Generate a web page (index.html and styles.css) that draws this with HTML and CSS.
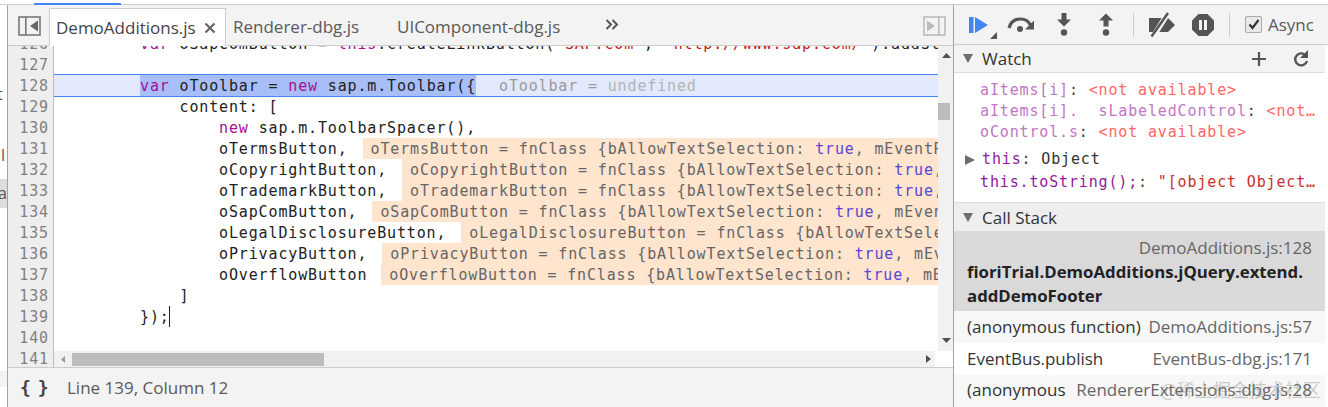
FILE: index.html
```html
<!DOCTYPE html>
<html lang="en">
<head>
<meta charset="utf-8">
<title>DevTools Sources</title>
<link rel="stylesheet" href="styles.css">
</head>
<body>
<div class="topline"><div class="progress"></div></div>
<div class="app">
  <div class="strip">
    <div class="strip-t">t</div>
    <div class="strip-l">l</div>
    <div class="strip-a">a</div>
    <div class="strip-end"></div>
  </div>
  <main class="main">
    <div class="tabbar">
      <svg class="toggle" width="23" height="20" viewBox="0 0 23 20"><rect x="1" y="1" width="21" height="18" fill="none" stroke="#777" stroke-width="1.6"/><rect x="7" y="1" width="1.6" height="18" fill="#777"/><path d="M20 4.5v11l-8-5.500z" fill="#666"/></svg>
      <div class="tab active"><span>DemoAdditions.js</span><svg class="close" width="12" height="12" viewBox="0 0 12 12"><path d="M1.500 1.500l9 9M10.500 1.500l-9 9" stroke="#666" stroke-width="2.200"/></svg></div>
      <div class="tab t2">Renderer-dbg.js</div>
      <div class="tab t3">UIComponent-dbg.js</div>
      <svg class="more" width="14" height="12" viewBox="0 0 14 12"><path d="M1.500 1l4.500 4.500-4.500 4.500M7.500 1l4.500 4.500-4.500 4.500" fill="none" stroke="#555" stroke-width="2"/></svg>
      <svg class="toggle right" width="23" height="20" viewBox="0 0 23 20"><rect x="1" y="1" width="21" height="18" fill="none" stroke="#bbb" stroke-width="1.600"/><rect x="15" y="1" width="1.600" height="18" fill="#bbb"/><path d="M4 4.500v11l8-5.500z" fill="#bbb"/></svg>
    </div>
    <div class="editor">
      <div class="gutter">
        <div class="gutter-lines">
          <div>126</div><div>127</div><div>128</div><div>129</div><div>130</div><div>131</div><div>132</div><div>133</div>
          <div>134</div><div>135</div><div>136</div><div>137</div><div>138</div><div>139</div><div>140</div><div>141</div>
        </div>
      </div>
      <div class="code">
        <div class="code-row">
          <div class="lines">
            <div class="line">        <span class="kw">var</span> oSapComButton = <span class="kw">this</span>.createLinkButton(<span class="str">"SAP.com"</span>, <span class="str">"http://www.sap.com/"</span>).addStyleClass(</div>
            <div class="line"> </div>
            <div class="line current"><span class="sel">        </span><span class="selected"><span class="kw">var</span> oToolbar = <span class="kw">new</span> sap.m.Toolbar({</span><span class="hint">oToolbar = <span class="hint-un">undefined</span></span></div>
            <div class="line">            content: [</div>
            <div class="line">                <span class="kw">new</span> sap.m.ToolbarSpacer(),</div>
            <div class="line">                oTermsButton,<span class="deco">oTermsButton = fnClass {bAllowTextSelection: <span class="bool">true</span>, mEventRegistry: {}, sId: "__link0"}</span></div>
            <div class="line">                oCopyrightButton,<span class="deco">oCopyrightButton = fnClass {bAllowTextSelection: <span class="bool">true</span>, mEventRegistry: {}}</span></div>
            <div class="line">                oTrademarkButton,<span class="deco">oTrademarkButton = fnClass {bAllowTextSelection: <span class="bool">true</span>, mEventRegistry: {}}</span></div>
            <div class="line">                oSapComButton,<span class="deco">oSapComButton = fnClass {bAllowTextSelection: <span class="bool">true</span>, mEventRegistry: {}}</span></div>
            <div class="line">                oLegalDisclosureButton,<span class="deco">oLegalDisclosureButton = fnClass {bAllowTextSelection: <span class="bool">true</span>, mEventRegistry: {}}</span></div>
            <div class="line">                oPrivacyButton,<span class="deco">oPrivacyButton = fnClass {bAllowTextSelection: <span class="bool">true</span>, mEventRegistry: {}}</span></div>
            <div class="line">                oOverflowButton<span class="deco deco-last">oOverflowButton = fnClass {bAllowTextSelection: <span class="bool">true</span>, mEventRegistry: {}}</span></div>
            <div class="line">            ]</div>
            <div class="line">        });<span class="caret"></span></div>
            <div class="line"> </div>
            <div class="line"> </div>
          </div>
          <div class="vscroll">
            <svg class="arrow-up" width="9" height="5" viewBox="0 0 9 5"><path d="M0 5l4.500-5 4.500 5z" fill="#505050"/></svg>
            <div class="vthumb"></div>
            <svg class="arrow-down" width="9" height="5" viewBox="0 0 9 5"><path d="M0 0l4.500 5 4.500-5z" fill="#505050"/></svg>
          </div>
        </div>
        <div class="hscroll">
          <svg class="arrow-left" width="4" height="7" viewBox="0 0 4 7"><path d="M4 0L0 3.500 4 7z" fill="#999"/></svg>
          <div class="hthumb"></div>
          <svg class="arrow-right" width="5" height="8" viewBox="0 0 5 8"><path d="M0 0l5 4-5 4z" fill="#505050"/></svg>
          <div class="corner"></div>
        </div>
      </div>
    </div>
    <div class="status">
      <span class="braces">{ }</span>
      <span class="pos">Line 139, Column 12</span>
    </div>
  </main>
  <aside class="side">
    <div class="debugbar">
      <svg class="ic-resume" width="29" height="24" viewBox="0 0 29 24"><rect x="0" y="0" width="4.500" height="16" fill="#4285f4"/><path d="M6 0l13 8-13 8z" fill="#4285f4"/><path d="M28 15v7h-7z" fill="#555"/></svg>
      <svg class="ic-over" width="28" height="18" viewBox="0 0 28 18"><path d="M2 13C4 6 9 4 13.500 4c4.500 0 8 2 10 6" fill="none" stroke="#555" stroke-width="3.200"/><path d="M27 5.500v9h-9z" fill="#555"/><circle cx="13" cy="14" r="3" fill="#555"/></svg>
      <svg class="ic-into" width="14" height="24" viewBox="0 0 14 24"><rect x="4.500" y="0" width="5" height="7" fill="#555"/><path d="M0 6.500h14l-7 7z" fill="#555"/><circle cx="7" cy="19.500" r="3.200" fill="#555"/></svg>
      <svg class="ic-out" width="14" height="24" viewBox="0 0 14 24"><rect x="4.500" y="6" width="5" height="7.500" fill="#555"/><path d="M0 7.500h14l-7-7z" fill="#555"/><circle cx="7" cy="19.500" r="3.200" fill="#555"/></svg>
      <div class="sep"></div>
      <svg class="ic-bp" width="28" height="26" viewBox="0 0 28 26"><path d="M1 6h19l7 7-7 7H1z" fill="#555"/><path d="M5 25L20 1" stroke="#f3f3f3" stroke-width="5.500"/><path d="M3.500 24.500L20 1" stroke="#555" stroke-width="2.500"/></svg>
      <svg class="ic-pause" width="22" height="22" viewBox="0 0 22 22"><path d="M6.500 0h9L22 6.500v9L15.500 22h-9L0 15.500v-9z" fill="#555"/><rect x="7" y="6" width="3" height="10" fill="#f3f3f3"/><rect x="12" y="6" width="3" height="10" fill="#f3f3f3"/></svg>
      <div class="sep sep2"></div>
      <div class="check"><svg width="12" height="11" viewBox="0 0 12 11"><path d="M1.500 5.500l3 3.500 6-8" fill="none" stroke="#333" stroke-width="2.200"/></svg></div>
      <span class="async">Async</span>
    </div>
    <div class="sec-head">
      <span class="tri"></span><span class="sec-title">Watch</span>
      <svg class="ic-plus" width="16" height="16" viewBox="0 0 16 16"><path d="M8 1v14M1 8h14" stroke="#555" stroke-width="2.200"/></svg>
      <svg class="ic-refresh" width="16" height="17" viewBox="0 0 16 17"><path d="M13.500 6.500A6 6 0 1 0 14 11" fill="none" stroke="#555" stroke-width="2.400"/><path d="M15 0v8H7z" fill="#555"/></svg>
    </div>
    <div class="watch">
      <div class="w w1"><span class="wn">aItems[i]</span><span class="wc">: </span><span class="wna">&lt;not available&gt;</span></div>
      <div class="w"><span class="wn">aItems[i].  sLabeledControl</span><span class="wc">: </span><span class="wna">&lt;not…</span></div>
      <div class="w"><span class="wn">oControl.s</span><span class="wc">: </span><span class="wna">&lt;not available&gt;</span></div>
      <div class="w w4"><span class="wtri"></span><span class="wt">this</span><span class="wc">: </span><span class="wo">Object</span></div>
      <div class="w w5"><span class="wt">this.toString();</span><span class="wc">: </span><span class="ws">"[object Object…</span></div>
    </div>
    <div class="sec-head stack"><span class="tri"></span><span class="sec-title">Call Stack</span></div>
    <div class="frame selected-frame">
      <div class="loc">DemoAdditions.js:128</div>
      <div class="fn-bold">fioriTrial.DemoAdditions.jQuery.extend.<br>addDemoFooter</div>
    </div>
    <div class="frame row alt"><span>(anonymous function)</span><span class="loc">DemoAdditions.js:57</span></div>
    <div class="frame row"><span>EventBus.publish</span><span class="loc">EventBus-dbg.js:171</span></div>
    <div class="frame row alt last"><span>(anonymous</span><span class="loc">RendererExtensions-dbg.js:28</span></div>
    <div class="mark">@稀土掘金技术社区</div>
  </aside>
</div>
</body>
</html>
```
FILE: styles.css
```css
* { box-sizing: border-box; }
html, body { margin: 0; height: 407px; overflow: hidden; background: #fff; }
body { font-family: "Open Sans", "Noto Sans", sans-serif; color: #333; }

.topline { height: 5px; border-bottom: 1px solid #ccc; position: relative; }
.progress { position: absolute; left: 34px; top: 3px; width: 87px; height: 2px; background: #4285f4; }

.app { display: flex; height: 402px; }

.strip { width: 7px; flex: none; overflow: hidden; font-size: 16px; color: #555; display: flex; flex-direction: column; }
.strip-t { height: 20px; margin-top: 79px; line-height: 20px; margin-left: -3px; }
.strip-l { height: 20px; margin-top: 41px; line-height: 20px; margin-left: 1px; }
.strip-a { height: 29px; margin-top: 14px; line-height: 29px; background: #ddd; margin-left: 0; text-indent: -2px; }
.strip-end { height: 16px; margin-top: 163px; background: #f3f3f3; }

.main { width: 947px; flex: none; display: flex; flex-direction: column; border-left: 1px solid #a3a3a3; border-right: 1px solid #a3a3a3; }

.tabbar { height: 41px; flex: none; background: #f3f3f3; border-bottom: 1px solid #ccc; display: flex; align-items: flex-end; position: relative; font-size: 17px; color: #5a5a5a; }
.toggle { position: absolute; left: 10px; top: 11px; }
.toggle.right { left: auto; right: 7px; top: 11px; }
.tab { height: 38px; line-height: 40px; white-space: nowrap; }
.tab.active { margin-left: 41px; width: 177px; margin-bottom: -1px; height: 38px; background: #fff; border: 1px solid #ccc; border-bottom: 1px solid #fff; padding: 2px 0 0 6px; display: flex; align-items: center; gap: 8px; color: #444; line-height: 24px; }
.close { flex: none; }
.t2 { margin-left: 7px; width: 164px; }
.t3 { width: 190px; }
.more { margin: 0 0 14px 18px; flex: none; }

.editor { height: 321px; flex: none; display: flex; overflow: hidden; }
.gutter { width: 46px; flex: none; background: #eee; border-right: 1px solid #bbb; overflow: hidden; font-family: "DejaVu Sans Mono", monospace; font-size: 15px; letter-spacing: .85px; color: #808080; text-align: right; padding-right: 4px; }
.gutter-lines { margin-top: -13px; }
.gutter-lines div { height: 21px; line-height: 23px; }

.code { flex: 1; min-width: 0; display: flex; flex-direction: column; }
.code-row { flex: 1; min-height: 0; display: flex; }
.lines { flex: 1; min-width: 0; overflow: hidden; margin-top: -13px; font-family: "DejaVu Sans Mono", monospace; font-size: 15px; letter-spacing: .85px; color: #222; }
.line { height: 21px; line-height: 23px; white-space: pre; padding-left: 7px; position: relative; }
.kw { color: #aa0d91; }
.str { color: #c41a16; }
.line.current { background: #e2e9fc; box-shadow: 0 -1px 0 #4285f4, 0 1px 0 #4285f4; height: 21px; margin-left: 0; }
.selected { background: #a8bef8; color: #222; display: inline-block; height: 21px; vertical-align: top; }
.hint { margin-left: 23px; color: #9a9a9a; }
.hint-un { color: #b3b3b3; }
.deco { background: #ffe4ce; color: #666; margin-left: 15px; padding: 0 0 0 8px; display: inline-block; height: 21px; vertical-align: top; }
.deco-last { margin-left: 14px; }
.bool { color: #5a45d6; }
.caret { display: inline-block; width: 1px; height: 21px; background: #222; vertical-align: top; margin-left: -1px; }

.vscroll { width: 15px; flex: none; background: #f1f1f1; position: relative; display: flex; flex-direction: column; align-items: flex-start; }
.arrow-up { margin: 7px 0 0 4px; flex: none; }
.vthumb { width: 12px; height: 17px; margin: 45px 0 0 0; background: #bcbcbc; flex: none; }
.arrow-down { position: absolute; left: 4px; bottom: 8px; }

.hscroll { height: 16px; flex: none; display: flex; align-items: center; background: #f1f1f1; position: relative; }
.arrow-left { margin-left: 7px; flex: none; }
.hthumb { width: 252px; height: 13px; margin-left: 7px; background: #bcbcbc; flex: none; }
.arrow-right { margin-left: 602px; flex: none; }
.corner { width: 18px; height: 16px; background: #fff; margin-left: auto; }

.status { flex: 1; background: #f3f3f3; border-top: 1px solid #ccc; display: flex; align-items: center; font-size: 17px; color: #5a5a5a; }
.braces { font-family: "DejaVu Sans Mono", monospace; font-weight: bold; font-size: 18px; margin-left: 12px; width: 47px; letter-spacing: -2px; color: #444; }

.side { flex: 1; min-width: 0; display: flex; flex-direction: column; position: relative; overflow: hidden; padding-right: 3px; }
.debugbar { height: 40px; flex: none; background: #f3f3f3; border-bottom: 1px solid #ccc; display: flex; align-items: center; position: relative; margin-right: -3px; }
.debugbar svg { flex: none; }
.ic-resume { margin: 9px 0 0 15px; }
.ic-over { margin: 0 0 1px 9px; }
.ic-into { margin: 1px 0 0 22px; }
.ic-out { margin: 1px 0 0 28px; }
.sep { width: 1px; height: 24px; background: #ccc; margin-left: 20px; flex: none; }
.ic-bp { margin: 0 0 0 14px; }
.ic-pause { margin: 0 0 0 16px; }
.sep2 { margin-left: 15px; }
.check { width: 17px; height: 17px; margin-left: 15px; border: 1px solid #aaa; border-radius: 2px; background: #e8e8e8; display: flex; align-items: center; justify-content: center; flex: none; }
.async { margin-left: 6px; font-size: 17px; color: #5a5a5a; }

.sec-head { height: 28px; flex: none; background: #f3f3f3; border-bottom: 1px solid #ddd; display: flex; align-items: center; font-size: 17px; color: #333; position: relative; }
.tri { width: 0; height: 0; border-left: 5px solid transparent; border-right: 5px solid transparent; border-top: 9px solid #6e6e6e; margin-left: 9px; }
.sec-title { margin-left: 9px; }
.ic-plus { margin-left: auto; }
.ic-refresh { margin: 0 16px 0 26px; }

.watch { height: 130px; flex: none; font-family: "DejaVu Sans Mono", monospace; font-size: 15px; letter-spacing: .85px; padding-top: 7px; border-bottom: 1px solid #ddd; }
.w { height: 21px; line-height: 21px; white-space: pre; padding-left: 26px; }
.w4 { margin-top: 6px; padding-left: 11px; display: flex; align-items: center; }
.w5 { margin-top: 2px; height: 19px; overflow: hidden; }
.wn { color: #c276c4; }
.wc { color: #444; }
.wna { color: #f66; }
.wt { color: #8f1a9e; }
.wo { color: #333; }
.ws { color: #c9302c; }
.wtri { width: 0; height: 0; border-top: 5px solid transparent; border-bottom: 5px solid transparent; border-left: 10px solid #6e6e6e; margin-right: 7px; }

.stack { height: 28px; background: #eee; border-bottom: none; }
.frame { font-size: 17px; padding: 0 13px; color: #333; }
.selected-frame { height: 80px; flex: none; background: #d9d9d9; padding-top: 5px; }
.selected-frame .loc { text-align: right; line-height: 24px; }
.fn-bold { font-weight: 700; line-height: 24px; color: #222; white-space: nowrap; font-size: 16.800px; }
.loc { color: #666; }
.row { height: 32px; flex: none; display: flex; justify-content: space-between; align-items: center; white-space: nowrap; padding-bottom: 2px; }
.alt { background: #f7f7f7; }
.last { height: 40px; align-items: flex-start; padding-top: 3px; padding-bottom: 0; }
.mark { position: absolute; right: 7px; bottom: 5px; font-family: "Noto Sans CJK SC", "Noto Sans", sans-serif; font-size: 18px; color: rgba(130,130,130,.4); white-space: nowrap; }
```
